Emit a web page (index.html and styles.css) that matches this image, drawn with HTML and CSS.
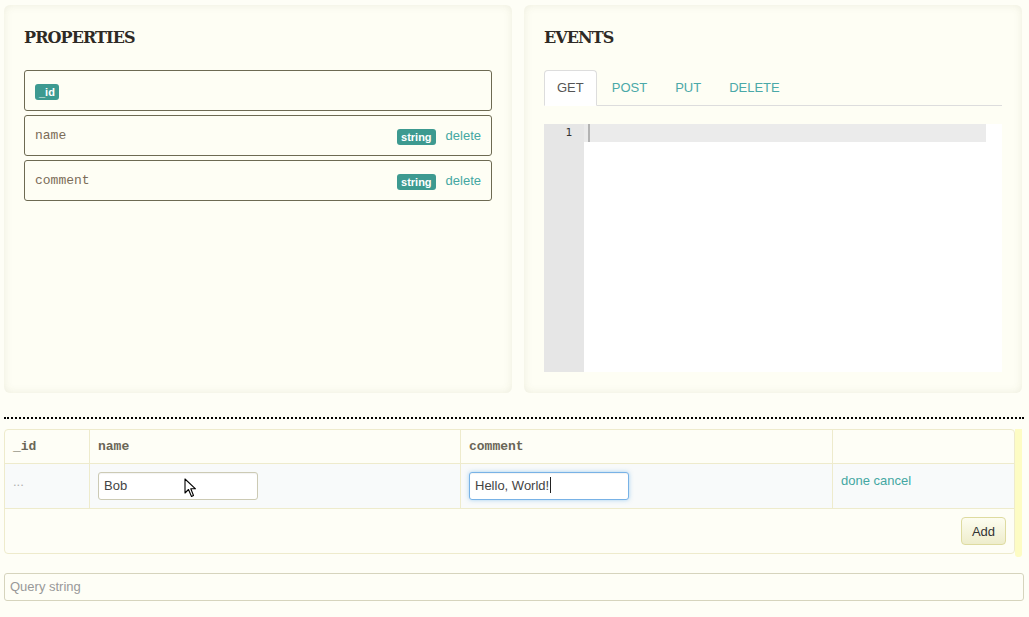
FILE: index.html
```html
<!DOCTYPE html>
<html>
<head>
<meta charset="utf-8">
<link rel="stylesheet" href="styles.css">
</head>
<body>
<div class="top">
  <section class="panel">
    <h2 class="panel-title">PROPERTIES</h2>
    <div class="props">
      <div class="prop"><span class="badge">_id</span></div>
      <div class="prop"><span class="prop-name">name</span><span class="badge">string</span><a class="link">delete</a></div>
      <div class="prop"><span class="prop-name">comment</span><span class="badge">string</span><a class="link">delete</a></div>
    </div>
  </section>
  <section class="panel panel-events">
    <h2 class="panel-title">EVENTS</h2>
    <ul class="tabs">
      <li class="tab active">GET</li>
      <li class="tab">POST</li>
      <li class="tab">PUT</li>
      <li class="tab">DELETE</li>
    </ul>
    <div class="editor">
      <div class="gutter"><div class="lineno">1</div></div>
      <div class="code">
        <div class="active-line"><span class="cursor"></span></div>
      </div>
    </div>
  </section>
</div>

<hr class="divider">

<div class="table-wrap">
  <div class="grid">
    <div class="th">_id</div>
    <div class="th">name</div>
    <div class="th">comment</div>
    <div class="th"></div>

    <div class="td muted">...</div>
    <div class="td cell-rel">
      <div class="input">Bob</div>
      <svg class="pointer" width="13" height="20" viewBox="0 0 13 20"><path d="M1 1 L1 15 L4.5 11.5 L7.5 18.5 L9.5 17.5 L6.8 10.8 L11.5 10.8 Z" fill="#fff" stroke="#000" stroke-width="1.1" stroke-linejoin="round"/></svg>
    </div>
    <div class="td"><div class="input focus">Hello, World!<span class="caret"></span></div></div>
    <div class="td"><a class="link">done</a> <a class="link">cancel</a></div>

    <div class="tf"><button class="btn">Add</button></div>
  </div>
  <div class="side-bar"></div>
</div>

<div class="query">Query string</div>
</body>
</html>
```
FILE: styles.css
```css
html, body {
  margin: 0;
  padding: 0;
}
body {
  background: #fefef6;
  font-family: "Liberation Sans", Arial, sans-serif;
  font-size: 13px;
  color: #555;
  width: 1029px;
  height: 617px;
  overflow: hidden;
  padding: 5px 5px 0 4px;
  box-sizing: border-box;
}
.top {
  display: grid;
  grid-template-columns: 508px 498px;
  column-gap: 12px;
  height: 388px;
}
.panel {
  background: #fefef4;
  border-radius: 6px;
  box-shadow: inset 0 0 8px rgba(90, 90, 40, 0.10);
  padding: 23px 20px 20px 20px;
  box-sizing: border-box;
}
.panel-title {
  margin: 0 0 22px 0;
  font-family: "DejaVu Serif", serif;
  font-weight: bold;
  font-size: 16px;
  letter-spacing: -0.9px;
  line-height: 20px;
  color: #2e2a25;
}
.props {
  display: flex;
  flex-direction: column;
  gap: 4px;
}
.prop {
  display: flex;
  align-items: center;
  height: 41px;
  box-sizing: border-box;
  border: 1px solid #6d6a52;
  border-radius: 3px;
  padding: 0 10px;
  gap: 10px;
}
.prop-name {
  font-family: "Liberation Mono", "Courier New", monospace;
  font-size: 13px;
  color: #7b6c58;
  flex: 1;
}
.badge {
  display: inline-block;
  background: #3d9a90;
  color: #fff;
  font-weight: bold;
  font-size: 11px;
  line-height: 12px;
  padding: 2px 4px;
  border-radius: 3px;
}
.prop .badge { margin-top: 2px; }
.link {
  color: #44a7a2;
  font-size: 13px;
  cursor: pointer;
}
.tabs {
  list-style: none;
  margin: 0;
  padding: 0;
  display: flex;
  border-bottom: 1px solid #dddddd;
  height: 35px;
  margin-top: 3px;
}
.tab {
  padding: 8px 12px;
  line-height: 18px;
  margin-right: 2px;
  margin-bottom: -1px;
  border: 1px solid transparent;
  border-radius: 4px 4px 0 0;
  color: #4aa9a8;
}
.tab.active {
  background: #fff;
  border-color: #dddddd #dddddd transparent;
  color: #555;
}
.editor {
  margin-top: 18px;
  height: 248px;
  display: flex;
  background: #fff;
}
.gutter {
  width: 40px;
  background: #e6e6e6;
  box-sizing: border-box;
  padding-right: 12px;
}
.lineno {
  text-align: right;
  font-family: "DejaVu Sans Mono", monospace;
  font-size: 11px;
  line-height: 18px;
  color: #333;
}
.code {
  flex: 1;
  padding-right: 16px;
}
.active-line {
  height: 18px;
  background: #ebebeb;
  padding-left: 4px;
}
.cursor {
  display: inline-block;
  width: 2px;
  height: 18px;
  background: #b3b3b3;
  vertical-align: top;
}
.divider {
  margin: 24px 0 0 0;
  border: 0;
  border-top: 2px dotted #000;
  height: 0;
}
.table-wrap {
  margin-top: 10px;
  display: flex;
  align-items: flex-start;
}
.grid {
  width: 1011px;
  display: grid;
  grid-template-columns: 84px 371px 372px 1fr;
  border: 1px solid #eeebcc;
  border-radius: 4px;
  box-sizing: border-box;
  background: #fefef6;
}
.th {
  height: 34px;
  box-sizing: border-box;
  padding: 8px 8px;
  line-height: 18px;
  font-family: "Liberation Mono", "Courier New", monospace;
  font-weight: bold;
  font-size: 13px;
  color: #6a6657;
  border-left: 1px solid #eeebcc;
  border-bottom: 1px solid #eeebcc;
}
.td {
  height: 45px;
  box-sizing: border-box;
  padding: 8px 8px;
  background: #f8fafa;
  border-left: 1px solid #eeebcc;
  border-bottom: 1px solid #eeebcc;
  line-height: 18px;
}
.th:nth-child(4n+1), .td:nth-child(4n+1) { border-left: 0; }
.muted {
  color: #b0b0b0;
  font-size: 13px;
  line-height: 20px;
}
.cell-rel { position: relative; }
.input {
  width: 160px;
  height: 28px;
  box-sizing: border-box;
  border: 1px solid #cccab4;
  border-radius: 3px;
  background: #fff;
  padding: 4px 5px;
  font-size: 13px;
  line-height: 18px;
  color: #444;
  box-shadow: inset 0 1px 1px rgba(0,0,0,0.05);
}
.input.focus {
  border-color: #78b2e6;
  box-shadow: inset 0 1px 1px rgba(0,0,0,0.05), 0 0 4px rgba(82,168,236,0.5);
}
.caret {
  display: inline-block;
  width: 1px;
  height: 16px;
  background: #222;
  vertical-align: -3px;
  margin-left: 1px;
}
.pointer {
  position: absolute;
  left: 94px;
  top: 14px;
}
.tf {
  grid-column: 1 / -1;
  height: 44px;
  box-sizing: border-box;
  padding: 8px 8px;
  display: flex;
  justify-content: flex-end;
}
.btn {
  width: 45px;
  height: 28px;
  border: 1px solid #dedba0;
  border-radius: 4px;
  background: linear-gradient(#fdfdf0, #eeedcc);
  font-family: "Liberation Sans", Arial, sans-serif;
  font-size: 13px;
  color: #333;
  padding: 0;
}
.side-bar {
  width: 7px;
  height: 128px;
  background: #fdfcc4;
  border-radius: 0 0 3px 3px;
}
.query {
  margin-top: 16px;
  width: 1020px;
  height: 28px;
  box-sizing: border-box;
  border: 1px solid #d6d4bd;
  border-radius: 3px;
  padding: 5px 5px;
  line-height: 16px;
  color: #999;
  font-size: 13px;
}
```
